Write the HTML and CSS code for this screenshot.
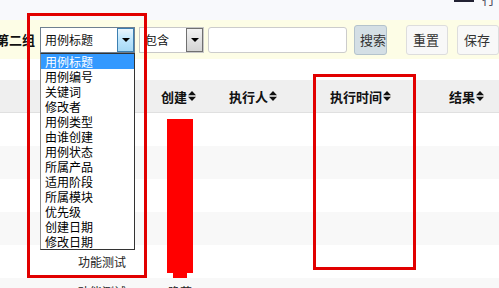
FILE: index.html
```html
<!DOCTYPE html>
<html lang="zh-CN">
<head>
    <meta charset="UTF-8">
    <title>用例列表</title>
    <link rel="stylesheet" href="styles.css">
</head>
<body>
    <div class="page">
        <div class="topbar">
            <span class="top-icon"></span>
            <span class="top-link">行</span>
        </div>

        <div class="filter">
            <span class="group-label">第二组</span>
            <div class="select field-select">
                <span class="select-text">用例标题</span>
                <span class="select-btn hover"><i class="caret"></i></span>
                <ul class="dropdown">
                    <li class="selected">用例标题</li>
                    <li>用例编号</li>
                    <li>关键词</li>
                    <li>修改者</li>
                    <li>用例类型</li>
                    <li>由谁创建</li>
                    <li>用例状态</li>
                    <li>所属产品</li>
                    <li>适用阶段</li>
                    <li>所属模块</li>
                    <li>优先级</li>
                    <li>创建日期</li>
                    <li>修改日期</li>
                </ul>
            </div>
            <div class="select op-select">
                <span class="select-text">包含</span>
                <span class="select-btn"><i class="caret"></i></span>
            </div>
            <input class="value-input" type="text">
            <button class="btn btn-search">搜索</button>
            <button class="btn btn-reset">重置</button>
            <button class="btn btn-save">保存</button>
        </div>

        <div class="spacer"></div>

        <div class="grid">
            <div class="row head">
                <div class="cell"></div>
                <div class="cell">创建<svg class="sort" width="8" height="10" viewBox="0 0 8 10"><path d="M4 0L8 4.3H0z M0 5.7h8L4 10z"/></svg></div>
                <div class="cell">执行人<svg class="sort" width="8" height="10" viewBox="0 0 8 10"><path d="M4 0L8 4.3H0z M0 5.7h8L4 10z"/></svg></div>
                <div class="cell">执行时间<svg class="sort" width="8" height="10" viewBox="0 0 8 10"><path d="M4 0L8 4.3H0z M0 5.7h8L4 10z"/></svg></div>
                <div class="cell">结果<svg class="sort" width="8" height="10" viewBox="0 0 8 10"><path d="M4 0L8 4.3H0z M0 5.7h8L4 10z"/></svg></div>
            </div>
            <div class="row"><div class="cell"></div><div class="cell"></div><div class="cell"></div><div class="cell"></div><div class="cell"></div></div>
            <div class="row"><div class="cell"></div><div class="cell"></div><div class="cell"></div><div class="cell"></div><div class="cell"></div></div>
            <div class="row"><div class="cell"></div><div class="cell"></div><div class="cell"></div><div class="cell"></div><div class="cell"></div></div>
            <div class="row"><div class="cell"></div><div class="cell"></div><div class="cell"></div><div class="cell"></div><div class="cell"></div></div>
            <div class="row">
                <div class="cell case-type">功能测试</div>
                <div class="cell"></div><div class="cell"></div><div class="cell"></div><div class="cell"></div>
            </div>
            <div class="row last">
                <div class="cell case-type">功能测试</div>
                <div class="cell creator">隐藏</div>
                <div class="cell"></div><div class="cell"></div><div class="cell"></div>
            </div>
        </div>

        <div class="mark mark-field"></div>
        <div class="mark mark-time"></div>
        <div class="mask-bar"></div>
    </div>
</body>
</html>
```

FILE: styles.css
```css
body {
    margin: 0;
    font-family: "Noto Sans CJK SC", "Noto Sans", sans-serif;
    font-size: 13px;
    color: #222;
    background: #fff;
    overflow: hidden;
}

.page {
    position: relative;
    width: 499px;
    height: 288px;
    overflow: hidden;
}

.topbar {
    height: 20px;
    background: #f8f9fc;
    display: flex;
    justify-content: flex-end;
    align-items: flex-start;
    gap: 8px;
    padding-right: 4px;
    overflow: hidden;
}

.top-icon {
    width: 20px;
    height: 2px;
    background: #223;
}

.top-link {
    font-size: 13px;
    line-height: 13px;
    margin-top: -8px;
    color: #445;
}

.filter {
    height: 39px;
    background: #fdfde6;
    display: flex;
    align-items: center;
}

.group-label {
    font-weight: bold;
    margin-left: -4px;
    width: 39px;
    white-space: nowrap;
    color: #111;
}

.select {
    position: relative;
    box-sizing: border-box;
    height: 26px;
    background: #fff;
    display: flex;
    align-items: center;
    font-size: 12px;
    color: #111;
}

.field-select {
    width: 95px;
    margin-left: 5px;
    border: 1px solid #6e7f90;
}

.op-select {
    width: 65px;
    margin-left: 4px;
    border: 1px solid #c8c8c8;
}

.select-text {
    flex: 1;
    padding-left: 4px;
}

.op-select .select-text {
    padding-left: 5px;
}

.select-btn {
    box-sizing: border-box;
    width: 17px;
    height: 24px;
    border: 1px solid #707070;
    background: linear-gradient(#f2f2f2, #d4d4d4);
    display: flex;
    align-items: center;
    justify-content: center;
}

.select-btn.hover {
    border-color: #3c7fb1;
    background: linear-gradient(#eaf6fd, #bee6fd 50%, #a7d9f5);
}

.caret {
    width: 0;
    height: 0;
    border-left: 4px solid transparent;
    border-right: 4px solid transparent;
    border-top: 4px solid #000;
}

.dropdown {
    position: absolute;
    left: -1px;
    top: 25px;
    width: 95px;
    box-sizing: border-box;
    margin: 0;
    padding: 0;
    list-style: none;
    background: #fff;
    border: 1px solid #333;
    border-left-color: #8a8a8a;
    z-index: 5;
}

.dropdown li {
    height: 15px;
    line-height: 15px;
    padding-left: 4px;
    color: #000;
    white-space: nowrap;
}

.dropdown li.selected {
    background: #3399ff;
    color: #fff;
}

.value-input {
    box-sizing: border-box;
    width: 139px;
    height: 26px;
    margin: 0 0 0 4px;
    border: 1px solid #ccc;
    border-radius: 3px;
    background: #fff;
}

.btn {
    box-sizing: border-box;
    height: 30px;
    padding: 0;
    font-family: inherit;
    font-size: 13px;
    color: #333;
    border: 1px solid #ddd;
    border-radius: 3px;
    background: #f8f8f8;
    text-align: left;
}

.btn-search {
    width: 33px;
    margin-left: 7px;
    padding-left: 5px;
    background: #d4dfe5;
    border-color: #b4c3cc;
}

.btn-reset {
    width: 42px;
    margin-left: 19px;
    padding-left: 6px;
}

.btn-save {
    width: 42px;
    margin-left: 9px;
    padding-left: 6px;
}

.spacer {
    height: 21px;
}

.grid .row {
    display: grid;
    grid-template-columns: 153px 68px 101px 119px 1fr;
    height: 33px;
}

.grid .row:nth-child(odd) {
    background: #f8f8f8;
}

.grid .row.head {
    height: 32px;
    background: #efefef;
    border-bottom: 1px solid #e0e0e0;
    font-weight: bold;
    color: #111;
}

.cell {
    display: flex;
    align-items: center;
    padding-left: 8px;
    white-space: nowrap;
}

.sort {
    margin-left: 1px;
    fill: #111;
}

.case-type {
    padding-left: 78px;
    font-size: 12px;
}

.row.last .cell {
    align-items: flex-start;
    padding-top: 5px;
}

.row.last .creator {
    padding-left: 15px;
    font-size: 12px;
}

.mark {
    position: absolute;
    box-sizing: border-box;
    border: 3px solid #e10000;
    z-index: 6;
}

.mark-field {
    left: 27px;
    top: 13px;
    width: 120px;
    height: 265px;
}

.mark-time {
    left: 313px;
    top: 74px;
    width: 103px;
    height: 196px;
}

.mask-bar {
    position: absolute;
    left: 167px;
    top: 119px;
    width: 26px;
    height: 154px;
    background: #ff0000;
    z-index: 6;
}

.mask-bar::after {
    content: "";
    position: absolute;
    left: 6px;
    top: 154px;
    width: 14px;
    height: 5px;
    background: #ff0000;
}
```
